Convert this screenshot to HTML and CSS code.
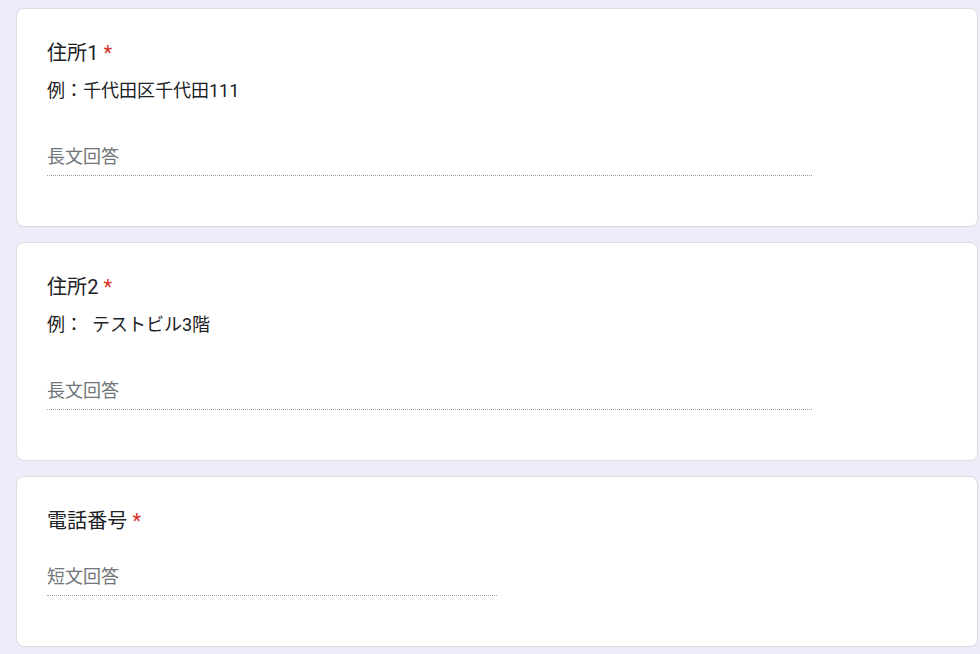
FILE: index.html
```html
<!DOCTYPE html>
<html lang="ja">
<head>
    <meta charset="UTF-8">
    <meta name="viewport" content="width=device-width, initial-scale=1.0">
    <title>フォーム</title>
    <link rel="stylesheet" href="styles.css">
</head>
<body>
    <div class="form-list">
        <div class="question-card">
            <div class="question-title">住所1<span class="required">*</span></div>
            <div class="question-desc">例：千代田区千代田111</div>
            <div class="answer answer-long">
                <span class="placeholder">長文回答</span>
            </div>
        </div>

        <div class="question-card">
            <div class="question-title">住所2<span class="required">*</span></div>
            <div class="question-desc">例：&nbsp; テストビル3階</div>
            <div class="answer answer-long">
                <span class="placeholder">長文回答</span>
            </div>
        </div>

        <div class="question-card">
            <div class="question-title">電話番号<span class="required">*</span></div>
            <div class="answer answer-short">
                <span class="placeholder">短文回答</span>
            </div>
        </div>
    </div>
</body>
</html>
```

FILE: styles.css
```css
:root {
    --page-bg: #f0ebf8;
    --card-border: #dadce0;
    --text-color: #202124;
    --placeholder-color: #70757a;
    --required-color: #d93025;
}

body {
    margin: 0;
    background-color: var(--page-bg);
    font-family: Roboto, "Noto Sans CJK JP", sans-serif;
    color: var(--text-color);
}

.form-list {
    display: flex;
    flex-direction: column;
    gap: 15px;
    padding: 8px 2px 8px 16px;
}

.question-card {
    background-color: white;
    border: 1px solid var(--card-border);
    border-radius: 8px;
    padding: 29px 30px 50px 30px;
}

.question-title {
    font-size: 20px;
    line-height: 30px;
    letter-spacing: 0.1px;
}

.required {
    color: var(--required-color);
    padding-left: 0.25em;
}

/* bottom margin collapses with the answer's top margin */
.question-desc {
    font-size: 18px;
    line-height: 25px;
    margin-top: 10px;
    margin-bottom: 41px;
}

.answer {
    margin-top: 28px;
    padding-bottom: 6px;
    border-bottom: 1px dotted rgba(0, 0, 0, 0.38);
}

.answer-long {
    width: 85%;
}

.answer-short {
    width: 50%;
}

.placeholder {
    display: block;
    font-size: 18px;
    line-height: 25px;
    color: var(--placeholder-color);
}
```
